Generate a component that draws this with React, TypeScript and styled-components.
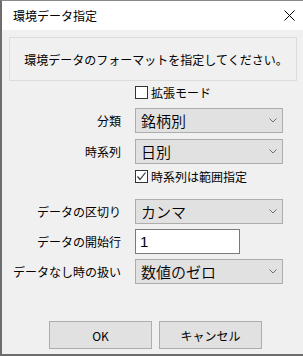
import styled, { createGlobalStyle } from "styled-components";

const GlobalStyle = createGlobalStyle`
  html, body {
    margin: 0;
    padding: 0;
    background: #ffffff;
  }
  body {
    font-family: "Noto Sans CJK JP", "Noto Sans", sans-serif;
    color: #000;
  }
`;

const Window = styled.div`
  width: 303px;
  height: 356px;
  box-sizing: border-box;
  display: flex;
  flex-direction: column;
  border-left: 2px solid #6d6d6d;
  border-top: 1px solid #8a8a8a;
  border-bottom: 2px solid #6d6d6d;
  overflow: hidden;
`;

const TitleBar = styled.div`
  height: 29px;
  flex-shrink: 0;
  background: #ffffff;
  display: flex;
  align-items: center;
  justify-content: space-between;
  padding: 0 8px 0 11px;
  font-size: 12px;
`;

const Client = styled.div`
  flex: 1;
  background: #f0f0f0;
  display: flex;
  flex-direction: column;
  padding: 7px 6px 0 7px;
`;

const MessageBox = styled.div`
  height: 44px;
  box-sizing: border-box;
  border: 1px solid #dcdcdc;
  display: flex;
  align-items: center;
  justify-content: center;
  font-size: 12px;
  padding-left: 6px;
`;

type RowProps = {
  $top: number;
};

const Row = styled.div<RowProps>`
  display: grid;
  grid-template-columns: 119px 148px;
  column-gap: 14px;
  align-items: center;
  margin-top: ${({ $top }) => $top}px;
  margin-left: -7px;
`;

const Label = styled.div`
  font-size: 12px;
  text-align: right;
  white-space: nowrap;
`;

const CheckLabel = styled.label`
  grid-column: 2;
  display: flex;
  align-items: center;
  gap: 3px;
  font-size: 12px;
  height: 13px;
  white-space: nowrap;
`;

const Box = styled.span`
  width: 13px;
  height: 13px;
  box-sizing: border-box;
  border: 1px solid #333333;
  background: #ffffff;
  display: flex;
  align-items: center;
  justify-content: center;
`;

const Select = styled.div`
  height: 25px;
  box-sizing: border-box;
  background: #e1e1e1;
  border: 1px solid #adadad;
  display: flex;
  align-items: center;
  justify-content: space-between;
  padding: 0 5px 0 5px;
  font-size: 15px;
  font-weight: 350;
`;

const Input = styled.div`
  width: 105px;
  height: 25px;
  box-sizing: border-box;
  background: #ffffff;
  border: 1px solid #7a7a7a;
  display: flex;
  align-items: center;
  padding-left: 4px;
  font-family: "Liberation Sans", Arial, sans-serif;
  font-size: 15px;
`;

const ButtonBar = styled.div`
  display: flex;
  gap: 7px;
  margin-top: 37px;
  margin-left: 40px;
`;

const Button = styled.div`
  width: 103px;
  height: 28px;
  box-sizing: border-box;
  background: #e1e1e1;
  border: 1px solid #adadad;
  display: flex;
  align-items: center;
  justify-content: center;
  font-size: 12px;
`;

const Chevron = () => (
  <svg width="8" height="5" viewBox="0 0 8 5">
    <path d="M0.5 0.5 L4 4 L7.5 0.5" fill="none" stroke="#707070" strokeWidth="1" />
  </svg>
);

const CloseIcon = () => (
  <svg width="11" height="11" viewBox="0 0 11 11">
    <path d="M0.5 0.5 L10.5 10.5 M10.5 0.5 L0.5 10.5" stroke="#000" strokeWidth="1" />
  </svg>
);

const CheckIcon = () => (
  <svg width="11" height="11" viewBox="0 0 11 11">
    <path d="M1.5 5.5 L4 8.5 L9.5 1.5" fill="none" stroke="#333" strokeWidth="1.2" />
  </svg>
);

type CheckProps = {
  checked: boolean;
  text: string;
};

const Check = ({ checked, text }: CheckProps) => (
  <CheckLabel>
    <Box>{checked && <CheckIcon />}</Box>
    {text}
  </CheckLabel>
);

type DropdownProps = {
  label: string;
  value: string;
  top: number;
};

const DropdownRow = ({ label, value, top }: DropdownProps) => (
  <Row $top={top}>
    <Label>{label}</Label>
    <Select>
      <span>{value}</span>
      <Chevron />
    </Select>
  </Row>
);

export default function App() {
  return (
    <>
      <GlobalStyle />
      <Window>
        <TitleBar>
          <span>環境データ指定</span>
          <CloseIcon />
        </TitleBar>
        <Client>
          <MessageBox>環境データのフォーマットを指定してください。</MessageBox>
          <Row $top={5}>
            <Check checked={false} text="拡張モード" />
          </Row>
          <DropdownRow label="分類" value="銘柄別" top={9} />
          <DropdownRow label="時系列" value="日別" top={6} />
          <Row $top={6}>
            <Check checked text="時系列は範囲指定" />
          </Row>
          <DropdownRow label="データの区切り" value="カンマ" top={16} />
          <Row $top={5}>
            <Label>データの開始行</Label>
            <Input>1</Input>
          </Row>
          <DropdownRow label="データなし時の扱い" value="数値のゼロ" top={5} />
          <ButtonBar>
            <Button>OK</Button>
            <Button>キャンセル</Button>
          </ButtonBar>
        </Client>
      </Window>
    </>
  );
}
